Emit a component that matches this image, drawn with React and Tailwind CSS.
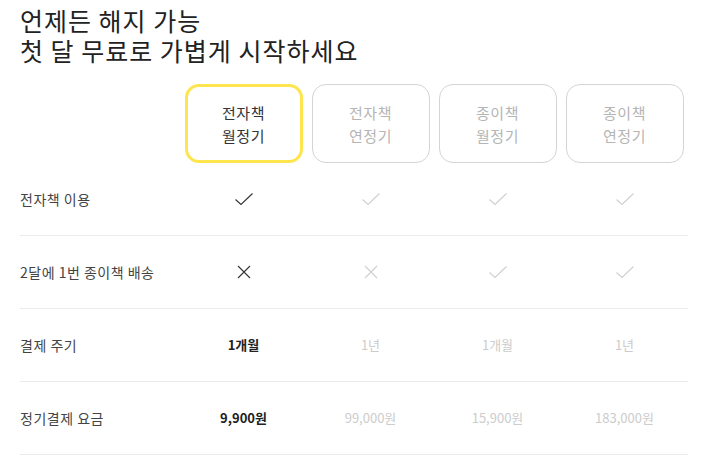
import React from 'react';

const plans = [
  { top: '전자책', bottom: '월정기', active: true },
  { top: '전자책', bottom: '연정기' },
  { top: '종이책', bottom: '월정기' },
  { top: '종이책', bottom: '연정기' },
];

const rows = [
  { label: '전자책 이용', cells: ['check', 'check', 'check', 'check'] },
  { label: '2달에 1번 종이책 배송', cells: ['x', 'x', 'check', 'check'] },
  { label: '결제 주기', cells: ['1개월', '1년', '1개월', '1년'] },
  { label: '정기결제 요금', cells: ['9,900원', '99,000원', '15,900원', '183,000원'] },
];

function Check({ active }) {
  return (
    <svg width="20" height="14" viewBox="0 0 20 14" fill="none">
      <path d="M1.5 7.5 L7 12.5 L18.5 1.5" stroke={active ? '#333' : '#cfcfcf'} strokeWidth="1.1" />
    </svg>
  );
}

function Cross({ active }) {
  return (
    <svg width="14" height="14" viewBox="0 0 14 14" fill="none">
      <path d="M1 1 L13 13 M13 1 L1 13" stroke={active ? '#333' : '#cfcfcf'} strokeWidth="1.1" />
    </svg>
  );
}

export default function App() {
  return (
    <div
      className="bg-white w-[701px] h-[460px] overflow-hidden px-5 pt-[5px]"
      style={{ fontFamily: '"Noto Sans CJK KR", "Noto Sans", sans-serif' }}
    >
      <h1 className="text-[25px] leading-[30px] tracking-[1px] text-[#222] font-normal">
        <span className="block">언제든 해지 가능</span>
        <span className="block">첫 달 무료로 가볍게 시작하세요</span>
      </h1>

      <div className="mt-[19px] grid grid-cols-[160px_repeat(4,127px)]">
        <div />
        {plans.map((p, i) => (
          <div key={i} className="flex justify-center">
            <div
              className={
                p.active
                  ? 'w-[118px] h-[79px] rounded-[14px] border-[3px] border-[#ffe54d] flex flex-col items-center justify-center text-[15px] leading-[23px] tracking-[0.5px] text-[#333]'
                  : 'w-[118px] h-[79px] rounded-[14px] border border-[#d4d4d4] flex flex-col items-center justify-center text-[15px] leading-[23px] tracking-[0.5px] text-[#b5b5b5]'
              }
            >
              <span>{p.top}</span>
              <span>{p.bottom}</span>
            </div>
          </div>
        ))}

        {rows.map((r, ri) => (
          <React.Fragment key={ri}>
            <div className="h-[73px] border-b border-[#ebebeb] flex items-center text-[14px] tracking-[0.5px] text-[#444] whitespace-nowrap">
              {r.label}
            </div>
            {r.cells.map((c, ci) => (
              <div
                key={ci}
                className="h-[73px] border-b border-[#ebebeb] flex items-center justify-center"
              >
                {c === 'check' ? (
                  <Check active={ci === 0} />
                ) : c === 'x' ? (
                  <Cross active={ci === 0} />
                ) : (
                  <span
                    className={
                      ci === 0
                        ? 'text-[13px] font-bold text-[#222]'
                        : 'text-[13px] text-[#cccccc]'
                    }
                  >
                    {c}
                  </span>
                )}
              </div>
            ))}
          </React.Fragment>
        ))}
      </div>
    </div>
  );
}
